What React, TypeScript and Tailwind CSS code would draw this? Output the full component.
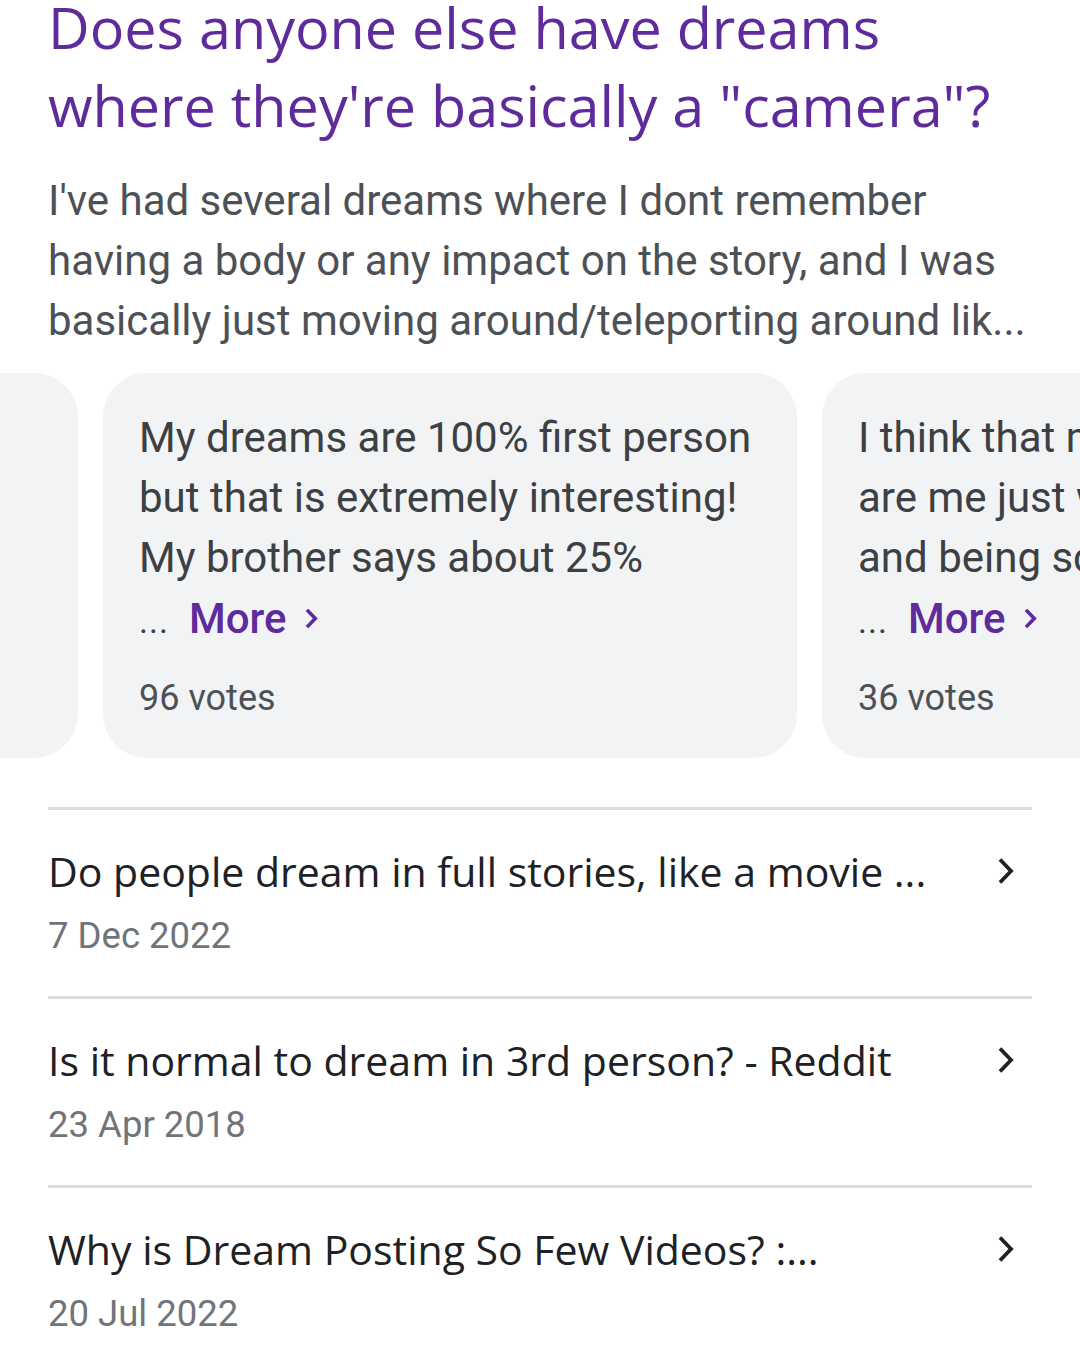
import React from 'react';

const answers = [
  { id: 0, text: ['', '', ''], votes: '' },
  {
    id: 1,
    text: ['My dreams are 100% first person', 'but that is extremely interesting!', 'My brother says about 25%'],
    votes: '96 votes',
  },
  {
    id: 2,
    text: ['I think that most of my dreams', 'are me just walking around', 'and being scared of things'],
    votes: '36 votes',
  },
];

const related = [
  { title: 'Do people dream in full stories, like a movie ...', date: '7 Dec 2022' },
  { title: 'Is it normal to dream in 3rd person? - Reddit', date: '23 Apr 2018' },
  { title: 'Why is Dream Posting So Few Videos? :...', date: '20 Jul 2022' },
];

function Chevron({ className, stroke = 3.6 }: { className?: string; stroke?: number }) {
  return (
    <svg viewBox="0 0 20 30" className={className} fill="none" stroke="currentColor" strokeWidth={stroke} strokeLinecap="butt">
      <path d="M4 3.5L15 15L4 26.5" />
    </svg>
  );
}

function AnswerCard({ answer }: { answer: (typeof answers)[number] }) {
  return (
    <div className="w-[694px] h-[385px] shrink-0 rounded-[44px] bg-[#f1f3f4] pl-[36px] pr-[30px] pt-[35px] overflow-hidden">
      {answer.votes && (
        <>
          <div className="text-[42px] leading-[60px] text-[#3c4043] whitespace-nowrap">
            {answer.text.map((line, i) => (
              <div key={i}>{line}</div>
            ))}
          </div>
          <div className="flex items-center h-[60px]">
            <span className="text-[34px] text-[#3c4043] tracking-[1px] pt-[6px]">...</span>
            <span className="ml-[20px] text-[42px] font-medium text-[#5e2a9c]">More</span>
            <Chevron className="ml-[18px] w-[15px] h-[23px] text-[#5e2a9c]" stroke={4.8} />
          </div>
          <div className="mt-[30px] text-[36px] leading-[40px] text-[#4d5156]">{answer.votes}</div>
        </>
      )}
    </div>
  );
}

export default function App() {
  return (
    <div className="w-[1080px] h-[1362px] bg-white overflow-hidden font-['Roboto',sans-serif]">
      <div className="px-[48px]">
        <h1 className="-mt-[12px] text-[57.5px] leading-[78px] text-[#5e2a9c] font-['Open_Sans',sans-serif]">
          Does anyone else have dreams where they're basically a "camera"?
        </h1>
        <p className="mt-[27px] text-[42px] leading-[60px] text-[#4d5156]">
          I've had several dreams where I dont remember having a body or any impact on the story, and I was basically just moving around/teleporting around lik...
        </p>
      </div>

      <div className="mt-[22px] flex gap-[25px] -ml-[616px]">
        {answers.map((a) => (
          <AnswerCard key={a.id} answer={a} />
        ))}
      </div>

      <div className="mt-[49px] px-[48px]">
        {related.map((r) => (
          <div key={r.title} className="border-t-[3px] border-[#dadce0] h-[189px] pt-[36px]">
            <div className="flex items-center h-[50px]">
              <div className="flex-1 text-[41px] leading-[50px] text-[#202124] font-['Open_Sans',sans-serif] whitespace-nowrap">
                {r.title}
              </div>
              <Chevron className="w-[20px] h-[30px] text-[#202124] mr-[16px]" stroke={3.8} />
            </div>
            <div className="mt-[20px] text-[36.5px] leading-[40px] text-[#70757a]">{r.date}</div>
          </div>
        ))}
      </div>
    </div>
  );
}
